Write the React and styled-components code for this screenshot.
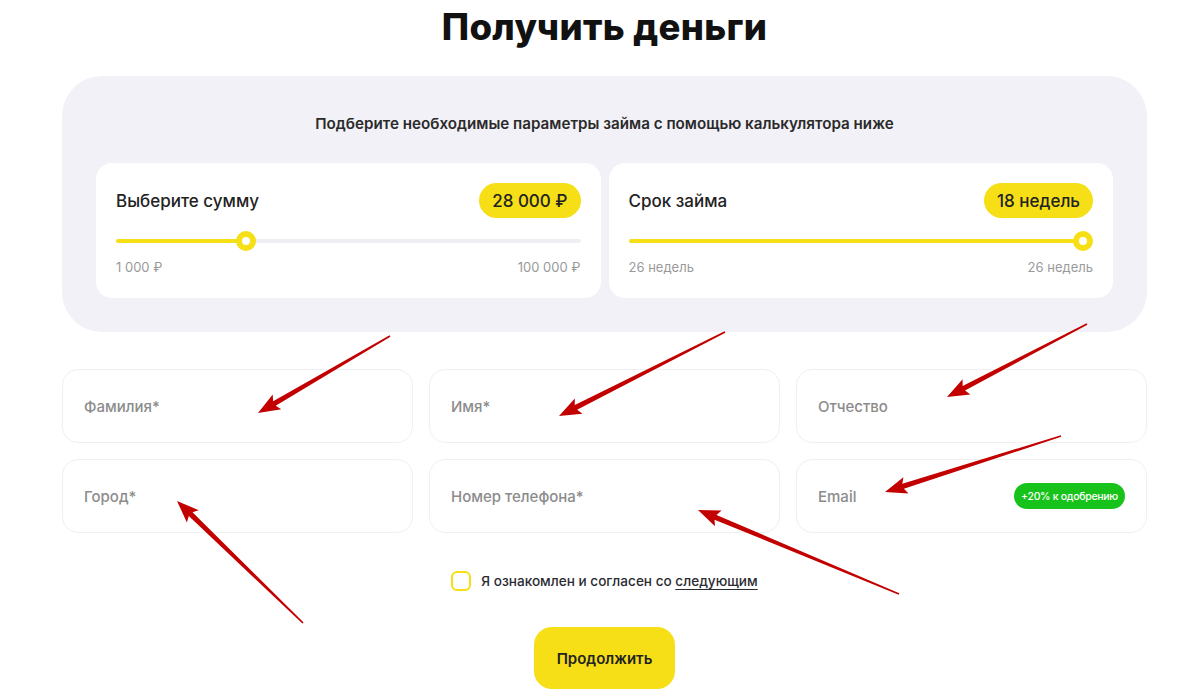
import React from 'react'
import styled, { createGlobalStyle } from 'styled-components'

const GlobalStyle = createGlobalStyle`
  body {
    margin: 0;
    background: #ffffff;
    font-family: Inter, "Noto Sans", sans-serif;
    color: #1f1f1f;
  }
`

const Page = styled.div`
  position: relative;
  width: 1200px;
  height: 697px;
  overflow: hidden;
`

const Container = styled.div`
  width: 1085px;
  margin-left: 62px;
  padding-top: 5px;
  display: flex;
  flex-direction: column;
`

const Title = styled.h1`
  margin: 0;
  text-align: center;
  font-size: 36.5px;
  line-height: 44px;
  font-weight: 800;
  color: #111;
  letter-spacing: 0.3px;
`

const Panel = styled.div`
  margin-top: 27px;
  background: #f2f1f7;
  border-radius: 40px;
  padding: 38px 34px 34px;
`

const Subtitle = styled.p`
  margin: 0;
  text-align: center;
  font-size: 15.2px;
  line-height: 20px;
  font-weight: 600;
  color: #2a2a2a;
`

const Cards = styled.div`
  margin-top: 29px;
  display: grid;
  grid-template-columns: 1fr 1fr;
  gap: 8px;
`

const Card = styled.div`
  background: #fff;
  border-radius: 16px;
  padding: 20px 20px 23px;
  display: flex;
  flex-direction: column;
`

const CardHead = styled.div`
  display: flex;
  align-items: center;
  justify-content: space-between;
`

const CardLabel = styled.span`
  font-size: 17px;
  font-weight: 500;
  color: #222;
`

const Pill = styled.span`
  height: 35px;
  padding: 0 13px;
  display: inline-flex;
  align-items: center;
  border-radius: 18px;
  background: #f6df17;
  font-size: 17px;
  font-weight: 500;
  color: #222;
`

const Track = styled.div`
  position: relative;
  margin-top: 13px;
  height: 20px;
  display: flex;
  align-items: center;

  &::before {
    content: '';
    flex: 1;
    height: 4px;
    border-radius: 2px;
    background: #efeef4;
  }
`

const Fill = styled.div`
  position: absolute;
  left: 0;
  top: 8px;
  height: 4px;
  border-radius: 2px;
  background: #f6df17;
`

const Thumb = styled.div`
  position: absolute;
  top: 0;
  width: 20px;
  height: 20px;
  border-radius: 50%;
  background: #fff;
  border: 6px solid #f6df17;
  box-sizing: border-box;
`

const Range = styled.div`
  margin-top: 8px;
  display: flex;
  justify-content: space-between;
  font-size: 13px;
  line-height: 16px;
  color: #9a9a9a;
`

const Fields = styled.div`
  margin-top: 37px;
  display: grid;
  grid-template-columns: repeat(3, 1fr);
  gap: 16px;
`

const Field = styled.div`
  height: 74px;
  box-sizing: border-box;
  border: 1px solid #f0f0f2;
  border-radius: 16px;
  padding: 0 21px;
  display: flex;
  align-items: center;
  justify-content: space-between;
  font-size: 15px;
  font-weight: 500;
  color: #8c8c8c;
`

const Badge = styled.span`
  height: 26px;
  padding: 0 7px;
  display: inline-flex;
  align-items: center;
  border-radius: 13px;
  background: #17c31b;
  color: #fff;
  font-size: 10.5px;
  font-weight: 500;
  letter-spacing: -0.3px;
`

const Agree = styled.label`
  margin-top: 38px;
  align-self: center;
  display: flex;
  align-items: center;
  gap: 10px;
  font-size: 13.6px;
  font-weight: 500;
  color: #2b2b33;
`

const Check = styled.span`
  width: 20px;
  height: 20px;
  box-sizing: border-box;
  border: 2px solid #f6df17;
  border-radius: 6px;
`

const Link = styled.span`
  text-decoration: underline;
  text-underline-offset: 3px;
`

const Button = styled.button`
  margin-top: 36px;
  align-self: center;
  width: 141px;
  height: 62px;
  border: none;
  border-radius: 18px;
  background: #f6df17;
  font-family: inherit;
  font-size: 15px;
  font-weight: 600;
  color: #222;
`

const Overlay = styled.svg`
  position: absolute;
  left: 0;
  top: 0;
  pointer-events: none;
`

const arrows = [
  [390, 336, 258, 413],
  [725, 332, 559, 416],
  [1087, 324, 947, 397],
  [1061, 436, 885, 492],
  [303, 623, 177, 501],
  [899, 594, 698, 510],
]

const arrowPoints = ([tx, ty, hx, hy]) => {
  const len = Math.hypot(hx - tx, hy - ty)
  const dx = (hx - tx) / len
  const dy = (hy - ty) / len
  const nx = -dy
  const ny = dx
  const L = 19
  const bx = hx - dx * L
  const by = hy - dy * L
  const pts = [
    [tx + nx * 0.8, ty + ny * 0.8],
    [bx + nx * 2.6, by + ny * 2.6],
    [bx - dx * 3 + nx * 8.5, by - dy * 3 + ny * 8.5],
    [hx, hy],
    [bx - dx * 3 - nx * 8.5, by - dy * 3 - ny * 8.5],
    [bx - nx * 2.6, by - ny * 2.6],
    [tx - nx * 0.8, ty - ny * 0.8],
  ]
  return pts.map((p) => p.map((v) => v.toFixed(1)).join(',')).join(' ')
}

const Slider = ({ label, value, min, max, pos }) => {
  // thumb stays inside the track: centre runs from 10px to width - 10px
  const at = `calc(${pos / 100} * (100% - 20px))`
  return (
    <Card>
      <CardHead>
        <CardLabel>{label}</CardLabel>
        <Pill>{value}</Pill>
      </CardHead>
      <Track>
        <Fill style={{ width: `calc(${pos / 100} * (100% - 20px) + 10px)` }} />
        <Thumb style={{ left: at }} />
      </Track>
      <Range>
        <span>{min}</span>
        <span>{max}</span>
      </Range>
    </Card>
  )
}

export default function App() {
  return (
    <Page>
      <GlobalStyle />
      <Container>
        <Title>Получить деньги</Title>
        <Panel>
          <Subtitle>Подберите необходимые параметры займа с помощью калькулятора ниже</Subtitle>
          <Cards>
            <Slider label="Выберите сумму" value="28 000 ₽" min="1 000 ₽" max="100 000 ₽" pos={27} />
            <Slider label="Срок займа" value="18 недель" min="26 недель" max="26 недель" pos={100} />
          </Cards>
        </Panel>
        <Fields>
          <Field>Фамилия*</Field>
          <Field>Имя*</Field>
          <Field>Отчество</Field>
          <Field>Город*</Field>
          <Field>Номер телефона*</Field>
          <Field>
            Email
            <Badge>+20% к одобрению</Badge>
          </Field>
        </Fields>
        <Agree>
          <Check />
          <span>
            Я ознакомлен и согласен со <Link>следующим</Link>
          </span>
        </Agree>
        <Button>Продолжить</Button>
      </Container>
      <Overlay width="1200" height="697">
        {arrows.map((a, i) => (
          <polygon key={i} points={arrowPoints(a)} fill="#c20000" />
        ))}
      </Overlay>
    </Page>
  )
}
